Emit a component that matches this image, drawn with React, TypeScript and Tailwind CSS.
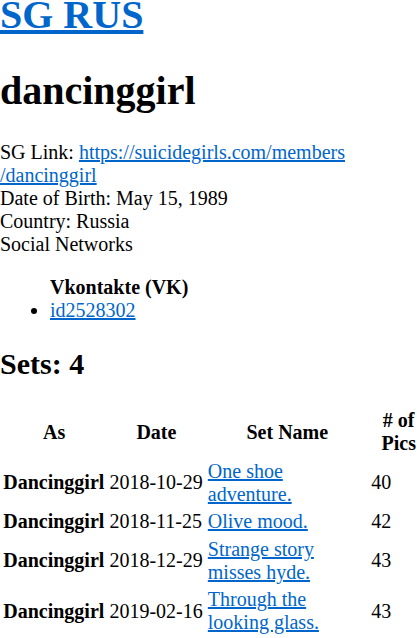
const sets = [
  { as: "Dancinggirl", date: "2018-10-29", name: "One shoe adventure.", pics: 40 },
  { as: "Dancinggirl", date: "2018-11-25", name: "Olive mood.", pics: 42 },
  { as: "Dancinggirl", date: "2018-12-29", name: "Strange story misses hyde.", pics: 43 },
  { as: "Dancinggirl", date: "2019-02-16", name: "Through the looking glass.", pics: 43 },
];

const linkCls = "text-[#0066cc] underline";

export default function App() {
  return (
    <div className="font-['Liberation_Serif','Times_New_Roman',serif] text-[20px] leading-[normal] text-black bg-white min-h-screen overflow-hidden">
      <h1 className="-mt-[9px] text-[40px] font-bold">
        <a href="#" className={linkCls}>SG RUS</a>
      </h1>
      <h1 className="mt-[29px] mb-[27px] text-[40px] font-bold">dancinggirl</h1>

      <div>
        SG Link:{" "}
        <a href="#" className={linkCls}>
          https://suicidegirls.com/members<wbr />/dancinggirl
        </a>
      </div>
      <div>Date of Birth: May 15, 1989</div>
      <div>Country: Russia</div>
      <div>Social Networks</div>

      <ul className="my-[20px] pl-[50px]">
        <li className="list-none font-bold">Vkontakte (VK)</li>
        <li className="list-disc">
          <a href="#" className={linkCls}>id2528302</a>
        </li>
      </ul>

      <h2 className="my-[25px] text-[30px] font-bold">Sets: 4</h2>

      {/* fixed widths, table is wider than the window so the last column runs off */}
      <table className="table-fixed w-[429.4px] max-w-none border-separate border-spacing-[2.5px]">
        <thead>
          <tr>
            <th className="w-[103.6px] p-[1.25px] text-center font-bold">As</th>
            <th className="w-[95.8px] p-[1.25px] text-center font-bold">Date</th>
            <th className="w-[160.5px] p-[1.25px] text-center font-bold">Set Name</th>
            <th className="w-[57px] p-[1.25px] text-center font-bold"># of Pics</th>
          </tr>
        </thead>
        <tbody>
          {sets.map((s) => (
            <tr key={s.date}>
              <td className="p-[1.25px] align-middle font-bold whitespace-nowrap">{s.as}</td>
              <td className="p-[1.25px] align-middle whitespace-nowrap">{s.date}</td>
              <td className="p-[1.25px] align-middle">
                <a href="#" className={linkCls}>{s.name}</a>
              </td>
              <td className="p-[1.25px] align-middle">{s.pics}</td>
            </tr>
          ))}
        </tbody>
      </table>
    </div>
  );
}
